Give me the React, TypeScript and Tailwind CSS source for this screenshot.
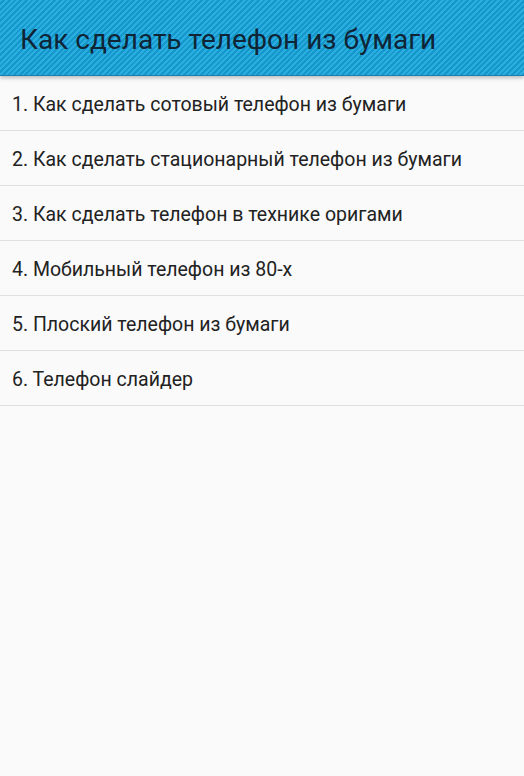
import React from "react";

const items = [
  "1. Как сделать сотовый телефон из бумаги",
  "2. Как сделать стационарный телефон из бумаги",
  "3. Как сделать телефон в технике оригами",
  "4. Мобильный телефон из 80-х",
  "5. Плоский телефон из бумаги",
  "6. Телефон слайдер",
];

export default function App() {
  return (
    <div className="w-[524px] h-[776px] bg-[#fafafa] font-['Roboto',sans-serif] overflow-hidden">
      <div className="relative h-[76px] flex items-center pl-[20px] pt-[4px] bg-[#1fa5da] bg-[repeating-linear-gradient(135deg,#2aaee0_0px,#2aaee0_2px,#1697cc_2px,#1697cc_4px)] border-b border-[#1a7fae] shadow-[0_2px_4px_rgba(0,0,0,0.25)] z-10">
        <span className="text-[28px] text-[#0f2536] leading-none">Как сделать телефон из бумаги</span>
      </div>
      <div className="flex flex-col">
        {items.map((t) => (
          <div
            key={t}
            className="h-[55px] flex items-center pl-[12px] pt-[3px] border-b border-[#e0e0e0] text-[19.5px] text-[#222222]"
          >
            {t}
          </div>
        ))}
      </div>
    </div>
  );
}
